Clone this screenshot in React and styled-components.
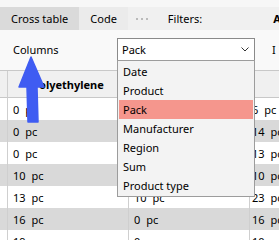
import React from 'react';
import styled, { createGlobalStyle } from 'styled-components';

const GlobalStyle = createGlobalStyle`
  html, body {
    margin: 0;
    padding: 0;
    background: #ffffff;
  }
  body {
    font-family: "Noto Sans", "Open Sans", sans-serif;
    font-size: 11px;
    color: #000;
  }
`;

const Page = styled.div`
  position: relative;
  width: 279px;
  height: 240px;
  overflow: hidden;
  background: #fff;
`;

const TopStrip = styled.div`
  height: 7px;
  background: #f7f7f7;
`;

const TabBar = styled.div`
  display: flex;
  align-items: stretch;
  height: 23px;
  background: #f0f0f0;
  white-space: nowrap;
`;

const Stub = styled.div`
  width: 9px;
  background: #f4e6e6;
`;

const Tab = styled.div`
  display: flex;
  align-items: center;
  padding: 0 11px;
  background: ${(p) => (p.$active ? '#dadada' : '#ebebeb')};
`;

const Separator = styled.div`
  width: 1px;
  margin-left: 4px;
  background: #dcdcdc;
`;

const Dots = styled.div`
  display: flex;
  align-items: center;
  gap: 3px;
  margin-left: 4px;
  span {
    width: 2px;
    height: 2px;
    border-radius: 50%;
    background: #a8a8a8;
  }
`;

const BarLabel = styled.div`
  display: flex;
  align-items: center;
  margin-left: ${(p) => p.$ml}px;
  font-weight: ${(p) => (p.$bold ? 700 : 400)};
`;

const Settings = styled.div`
  display: flex;
  align-items: flex-start;
  height: 40px;
  padding: 8px 0 0 13px;
  box-sizing: border-box;
  background: #f9f9f9;
  white-space: nowrap;
`;

const Label = styled.div`
  width: 104px;
  line-height: 23px;
`;

const SelectBox = styled.div`
  display: flex;
  align-items: center;
  justify-content: space-between;
  width: 138px;
  height: 23px;
  box-sizing: border-box;
  padding: 0 5px 0 4px;
  border: 1px solid #8a8a8a;
  background: #fff;
`;

const RightLabel = styled.div`
  margin-left: 17px;
  line-height: 23px;
`;

const Table = styled.div`
  display: grid;
  grid-template-columns: 7px 121px 121px 1fr;
  border-top: 1px solid #c8c8c8;
`;

const HeadCell = styled.div`
  height: 26px;
  display: flex;
  align-items: center;
  justify-content: center;
  font-weight: 700;
  background: #f0f0f0;
  border-bottom: 1px solid #c8c8c8;
  border-left: ${(p) => (p.$first ? 'none' : '1px solid #cfcfcf')};
  white-space: nowrap;
  overflow: hidden;
`;

const Cell = styled.div`
  height: 22px;
  display: flex;
  align-items: center;
  padding-left: ${(p) => p.$pad}px;
  background: ${(p) => (p.$odd ? '#d9d9d9' : '#ffffff')};
  border-left: ${(p) => (p.$first ? 'none' : '1px solid #cfcfcf')};
  white-space: nowrap;
  overflow: hidden;
`;

const Unit = styled.span`
  margin-left: 6px;
`;

const Dropdown = styled.div`
  position: absolute;
  top: 60px;
  left: 117px;
  width: 138px;
  box-sizing: border-box;
  padding: 1px;
  border: 1px solid #9c9c9c;
  background: #f3f3f3;
`;

const Option = styled.div`
  height: 19px;
  line-height: 19px;
  padding-left: 4px;
  background: ${(p) => (p.$selected ? '#f5968d' : 'transparent')};
`;

const Overlay = styled.svg`
  position: absolute;
  left: 0;
  top: 0;
  pointer-events: none;
`;

const options = ['Date', 'Product', 'Pack', 'Manufacturer', 'Region', 'Sum', 'Product type'];

const rows = [
  ['0', '5', '6'],
  ['0', '8', '14'],
  ['0', '4', '13'],
  ['10', '12', '10'],
  ['13', '10', '23'],
  ['16', '0', '16'],
  ['19', '0', '10'],
];

const Amount = ({ n }) => (
  <>
    <span>{n}</span>
    <Unit>pc</Unit>
  </>
);

export default function App() {
  return (
    <Page>
      <GlobalStyle />
      <TopStrip />
      <TabBar>
        <Stub />
        <Tab $active>Cross table</Tab>
        <Tab>Code</Tab>
        <Separator />
        <Dots>
          <span />
          <span />
          <span />
        </Dots>
        <BarLabel $ml={20}>Filters:</BarLabel>
        <BarLabel $ml={71} $bold>
          All
        </BarLabel>
      </TabBar>

      <Settings>
        <Label>Columns</Label>
        <SelectBox>
          <span>Pack</span>
          <svg width="8" height="5" viewBox="0 0 8 5">
            <polyline points="0.5,0.5 4,4 7.5,0.5" fill="none" stroke="#333" strokeWidth="1" />
          </svg>
        </SelectBox>
        <RightLabel>I</RightLabel>
      </Settings>

      <Table>
        <HeadCell $first />
        <HeadCell>Polyethylene</HeadCell>
        <HeadCell>Polypropylene</HeadCell>
        <HeadCell />
        {rows.map((r, i) => (
          <React.Fragment key={i}>
            <Cell $first $odd={i % 2 === 1} />
            <Cell $pad={5} $odd={i % 2 === 1}>
              <Amount n={r[0]} />
            </Cell>
            <Cell $pad={5} $odd={i % 2 === 1}>
              <Amount n={r[1]} />
            </Cell>
            <Cell $pad={2} $odd={i % 2 === 1}>
              <Amount n={r[2]} />
            </Cell>
          </React.Fragment>
        ))}
      </Table>

      <Dropdown>
        {options.map((o) => (
          <Option key={o} $selected={o === 'Pack'}>
            {o}
          </Option>
        ))}
      </Dropdown>

      {/* annotation arrow pointing at the Columns label */}
      <Overlay width="279" height="240">
        <polygon
          points="31,57 44,87 37,87 38,122 28,122 27,87 19,87"
          fill="#3f5cf2"
          stroke="#3f5cf2"
          strokeWidth="1.5"
          strokeLinejoin="round"
        />
      </Overlay>
    </Page>
  );
}
